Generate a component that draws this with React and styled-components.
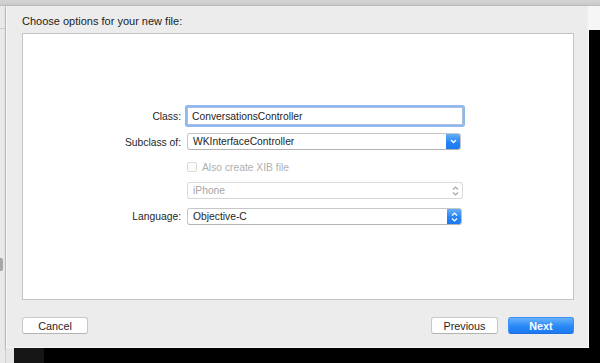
import React from "react";
import styled, { createGlobalStyle } from "styled-components";

const GlobalStyle = createGlobalStyle`
  html, body {
    margin: 0;
    padding: 0;
    background: #000;
  }
  body {
    font-family: "Liberation Sans", Arial, sans-serif;
    -webkit-font-smoothing: antialiased;
  }
`;

const Screen = styled.div`
  width: 600px;
  height: 363px;
  overflow: hidden;
  display: grid;
  grid-template-columns: 6px 583px 11px;
  grid-template-rows: 6px 342px 15px;
  background: #000;
`;

const TopStrip = styled.div`
  grid-column: 1 / 4;
  background: linear-gradient(#d3d3d3, #cdcdcd 70%, #b9b9b9);
`;

const LeftRail = styled.div`
  grid-column: 1;
  grid-row: 2 / 4;
  background: #e9e9e9;
  border-right: 1px solid #d0d0d0;
  display: flex;
  flex-direction: column;
  & .line {
    height: 1px;
    margin-top: 22px;
    background: #cfcfcf;
  }
  & .thumb {
    width: 3px;
    height: 13px;
    margin-top: 229px;
    background: #a7a7a7;
    border-radius: 0 2px 2px 0;
  }
`;

const RightRail = styled.div`
  grid-column: 3;
  grid-row: 2 / 4;
  display: flex;
  flex-direction: column;
  & .light {
    height: 24px;
    background: #f6f6f6;
  }
`;

const BottomStrip = styled.div`
  grid-column: 2;
  grid-row: 3;
  display: flex;
  & .light {
    width: 8px;
    background: #e6e6e6;
  }
  & .dark {
    width: 30px;
    background: #161616;
  }
`;

const Sheet = styled.section`
  grid-column: 2;
  grid-row: 2;
  background: #ececec;
  border: 1px solid #f7f7f7;
  border-top: none;
  box-shadow: 0 1px 2px rgba(0, 0, 0, 0.35);
  padding: 8px 14px 13px 15px;
  display: flex;
  flex-direction: column;
  box-sizing: border-box;
`;

const Title = styled.h1`
  margin: 0 0 5px;
  font-size: 11px;
  line-height: 14px;
  font-weight: normal;
  color: #1d1d1d;
`;

const Panel = styled.div`
  height: 268px;
  box-sizing: border-box;
  background: #fff;
  border: 1px solid #c4c4c4;
  padding-top: 73px;
`;

const Form = styled.div`
  display: grid;
  grid-template-columns: 158px 276px;
  grid-template-rows: 18px 19px 14px 18px 17px;
  column-gap: 6px;
  row-gap: 8px;
  font-size: 10.3px;
`;

const Label = styled.label`
  justify-self: end;
  align-self: center;
  color: #262626;
`;

const TextField = styled.div`
  box-sizing: border-box;
  height: 18px;
  border: 1px solid #a9bfdc;
  box-shadow: 0 0 0 2px #8fb8ef;
  border-radius: 1px;
  background: #fff;
  padding-left: 4px;
  display: flex;
  align-items: center;
  color: #1e1e1e;
`;

const Popup = styled.div`
  box-sizing: border-box;
  height: 17px;
  width: ${(p) => p.$width || 276}px;
  align-self: start;
  border: 1px solid ${(p) => (p.$disabled ? "#dcdcdc" : "#c6c6c6")};
  border-bottom-color: ${(p) => (p.$disabled ? "#d6d6d6" : "#b3b3b3")};
  border-radius: 3px;
  background: #fff;
  display: flex;
  align-items: center;
  color: ${(p) => (p.$disabled ? "#a6a6a6" : "#1e1e1e")};
  overflow: hidden;
  & .value {
    flex: 1;
    padding-left: 5px;
  }
`;

const Arrow = styled.span`
  width: 15px;
  height: 17px;
  margin: -1px -1px -1px 0;
  border-radius: 0 3px 3px 0;
  display: flex;
  align-items: center;
  justify-content: center;
  background: ${(p) =>
    p.$blue ? "linear-gradient(#6cb3fa, #2784f4 55%, #1a76ee)" : "transparent"};
  color: ${(p) => (p.$blue ? "#fff" : "#a8a8a8")};
`;

const CheckRow = styled.div`
  display: flex;
  align-items: center;
  gap: 5px;
  color: #b0b0b0;
`;

const Checkbox = styled.span`
  width: 10px;
  height: 10px;
  box-sizing: border-box;
  border: 1px solid #d8d8d8;
  border-radius: 2px;
  background: #fdfdfd;
`;

const Footer = styled.div`
  margin-top: 17px;
  display: flex;
  justify-content: space-between;
  & .group {
    display: flex;
    gap: 10px;
  }
`;

const Button = styled.button`
  box-sizing: border-box;
  width: ${(p) => p.$width || 66}px;
  height: 17px;
  padding: 0;
  font-family: inherit;
  font-size: 10.8px;
  border-radius: 3px;
  border: 1px solid ${(p) => (p.$primary ? "#3b8ff2" : "#c8c8c8")};
  border-bottom-color: ${(p) => (p.$primary ? "#1f6fdc" : "#b2b2b2")};
  background: ${(p) =>
    p.$primary ? "linear-gradient(#68b1fb, #2a89f6 55%, #1b7af2)" : "#fff"};
  color: ${(p) => (p.$primary ? "#fff" : "#1e1e1e")};
  font-weight: ${(p) => (p.$primary ? "bold" : "normal")};
`;

const ChevronDown = () => (
  <svg width="7" height="5" viewBox="0 0 7 5">
    <path d="M1 1l2.5 2.5L6 1" fill="none" stroke="currentColor" strokeWidth="1.3" />
  </svg>
);

const UpDown = () => (
  <svg width="7" height="10" viewBox="0 0 7 10">
    <path
      d="M1 3.5L3.5 1 6 3.5M1 6.5L3.5 9 6 6.5"
      fill="none"
      stroke="currentColor"
      strokeWidth="1.2"
    />
  </svg>
);

const App = () => (
  <>
    <GlobalStyle />
    <Screen>
      <TopStrip />
      <LeftRail>
        <div className="line" />
        <div className="thumb" />
      </LeftRail>
      <Sheet>
        <Title>Choose options for your new file:</Title>
        <Panel>
          <Form>
            <Label>Class:</Label>
            <TextField>ConversationsController</TextField>

            <Label>Subclass of:</Label>
            <Popup $width={274}>
              <span className="value">WKInterfaceController</span>
              <Arrow $blue>
                <ChevronDown />
              </Arrow>
            </Popup>

            <span />
            <CheckRow>
              <Checkbox />
              <span>Also create XIB file</span>
            </CheckRow>

            <span />
            <Popup $disabled>
              <span className="value">iPhone</span>
              <Arrow>
                <UpDown />
              </Arrow>
            </Popup>

            <Label>Language:</Label>
            <Popup $width={275}>
              <span className="value">Objective-C</span>
              <Arrow $blue>
                <UpDown />
              </Arrow>
            </Popup>
          </Form>
        </Panel>
        <Footer>
          <Button>Cancel</Button>
          <div className="group">
            <Button $width={67}>Previous</Button>
            <Button $primary>Next</Button>
          </div>
        </Footer>
      </Sheet>
      <RightRail>
        <div className="light" />
      </RightRail>
      <BottomStrip>
        <div className="light" />
        <div className="dark" />
      </BottomStrip>
    </Screen>
  </>
);

export default App;
